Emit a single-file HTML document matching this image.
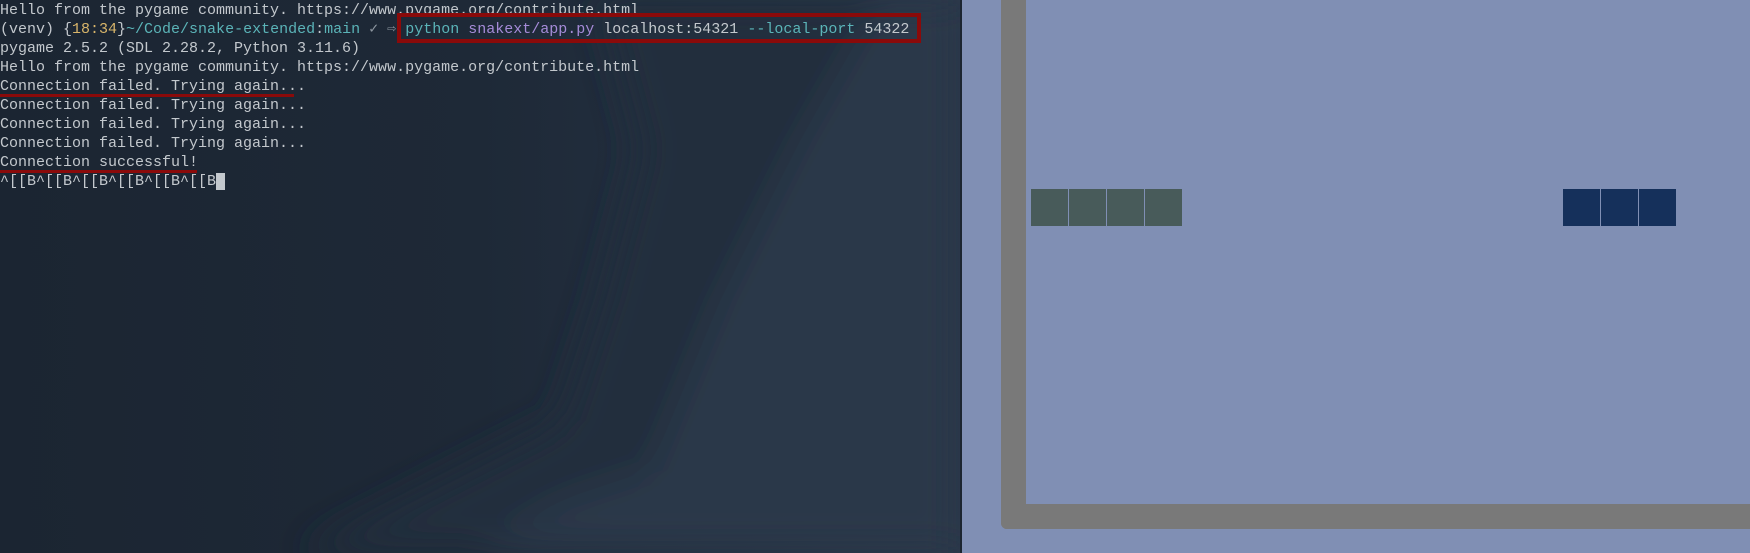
<!DOCTYPE html>
<html><head><meta charset="utf-8"><style>
html,body{margin:0;padding:0;overflow:hidden;width:1750px;height:553px}
body{position:relative;background:#808fb4;font-family:"Liberation Mono","DejaVu Sans Mono",monospace}
#term{position:absolute;left:0;top:0;width:960px;height:553px;background:linear-gradient(90deg,#1b2532 0%,#1e2937 50%,#243142 80%,#2a3749 100%);overflow:hidden}
#div{position:absolute;left:960px;top:0;width:2px;height:553px;background:#1c2530}
.t{position:absolute;left:0;font-size:15px;line-height:19px;color:#c3c8cd;white-space:pre;letter-spacing:0}
.y{color:#d8b56a}.c{color:#5bb4b8}.p{color:#a58bd8}.g{color:#8d96a0}
.wall{position:absolute;background:#797979}
.cell{position:absolute;top:189px;width:37px;height:37px}
.ul{position:absolute;left:0;height:3px;background:#8a0a0a;z-index:5}
svg{display:block}
</style></head><body>
<div id="term">
<svg width="960" height="553" viewBox="0 0 960 553" style="position:absolute;left:0;top:0">
<defs><filter id="b"><feGaussianBlur stdDeviation="18"/></filter></defs>
<g filter="url(#b)">
<polygon points="880,0 960,0 960,553 470,553 560,500 650,470 720,300 800,140" fill="#2b384a"/>
<polygon points="600,0 880,0 800,140 720,300 650,470 560,500 470,553 300,553 560,420 600,300 640,150" fill="#222e3d"/>
</g>
</svg>
<div class="t" style="top:1px">Hello from the pygame community. https://www.pygame.org/contribute.html</div>
<div class="t" style="top:20px">(venv) {<span class="y">18:34</span>}<span class="c">~/Code/snake-extended</span>:<span class="c">main</span> <span class="g">✓ ⇨</span> <span class="c">python</span> <span class="p">snakext/app.py</span> localhost:54321 <span class="c">--local-port</span> 54322</div>
<div class="t" style="top:39px">pygame 2.5.2 (SDL 2.28.2, Python 3.11.6)</div>
<div class="t" style="top:58px">Hello from the pygame community. https://www.pygame.org/contribute.html</div>
<div class="t" style="top:77px">Connection failed. Trying again...</div>
<div class="t" style="top:96px">Connection failed. Trying again...</div>
<div class="t" style="top:115px">Connection failed. Trying again...</div>
<div class="t" style="top:134px">Connection failed. Trying again...</div>
<div class="t" style="top:153px">Connection successful!</div>
<div class="t" style="top:172px">^[[B^[[B^[[B^[[B^[[B^[[B<span style="background:#c3c8cd;color:#1d2836"> </span></div>
<div style="position:absolute;left:397px;top:13px;width:516px;height:22px;border:4px solid #8a0a0a"></div>
<div class="ul" style="top:94px;width:294px"></div>
<div class="ul" style="top:170px;width:197px"></div>
</div>
<div id="div"></div>
<div class="wall" style="left:1001px;top:0;width:25px;height:529px;border-bottom-left-radius:6px"></div>
<div class="wall" style="left:1001px;top:504px;width:749px;height:25px;border-bottom-left-radius:6px"></div>
<div class="cell" style="left:1031px;background:#485b5a"></div>
<div class="cell" style="left:1069px;background:#485b5a"></div>
<div class="cell" style="left:1107px;background:#485b5a"></div>
<div class="cell" style="left:1145px;background:#485b5a"></div>
<div class="cell" style="left:1563px;background:#15305b"></div>
<div class="cell" style="left:1601px;background:#15305b"></div>
<div class="cell" style="left:1639px;background:#15305b"></div>
</body></html>
